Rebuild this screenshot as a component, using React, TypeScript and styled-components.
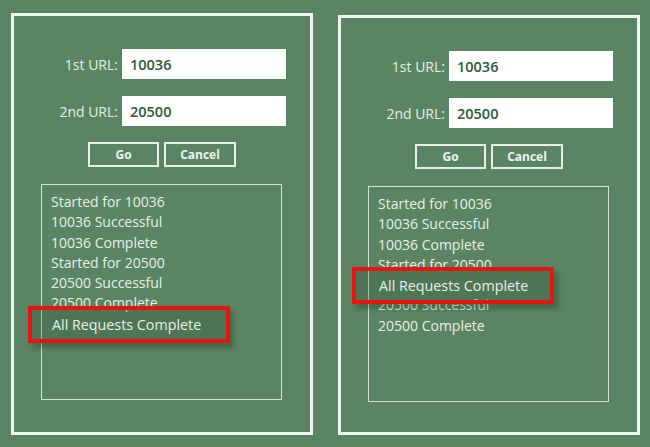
import React from 'react';
import styled, { createGlobalStyle } from 'styled-components';

const GlobalStyle = createGlobalStyle`
  html, body {
    margin: 0;
    padding: 0;
    background: #5b8462;
  }
  body {
    font-family: "Open Sans", "Noto Sans", sans-serif;
    color: #e9f0ea;
  }
`;

const Stage = styled.div`
  width: 650px;
  height: 447px;
  display: flex;
  align-items: flex-start;
  gap: 25px;
  padding-left: 11px;
  box-sizing: border-box;
  overflow: hidden;
`;

const Panel = styled.div<{ $top: number }>`
  width: 302px;
  height: ${(p) => 422 - (p.$top - 13)}px;
  margin-top: ${(p) => p.$top}px;
  box-sizing: border-box;
  border: 3px solid #f1f5f1;
  padding-top: 33px;
  display: flex;
  flex-direction: column;
  align-items: flex-start;
`;

const FieldGrid = styled.div`
  display: grid;
  grid-template-columns: 104px 164px;
  column-gap: 4px;
  row-gap: 17px;
  align-items: center;
`;

const Label = styled.label`
  text-align: right;
  font-size: 14px;
  color: #e9f0ea;
`;

const Field = styled.div`
  height: 30px;
  background: #ffffff;
  color: #2e5a38;
  font-size: 14.5px;
  font-weight: 600;
  display: flex;
  align-items: center;
  padding-left: 8px;
`;

const ButtonRow = styled.div`
  display: flex;
  gap: 5px;
  margin: 16px 0 0 74px;
`;

const Button = styled.button<{ $w: number }>`
  width: ${(p) => p.$w}px;
  height: 25px;
  box-sizing: border-box;
  background: transparent;
  border: 2px solid #e9f0ea;
  color: #eef4ee;
  font-family: inherit;
  font-size: 12px;
  font-weight: 700;
  padding: 0;
`;

const LogBox = styled.div`
  position: relative;
  width: 241px;
  height: 216px;
  margin: 17px 0 0 27px;
  box-sizing: border-box;
  border: 1px solid #d6e2d7;
  padding: 7px 0 0 9px;
`;

const LogLine = styled.div`
  font-size: 14px;
  line-height: 20.3px;
  white-space: nowrap;
`;

const Callout = styled.div<{ $left: number; $top: number }>`
  position: absolute;
  left: ${(p) => p.$left}px;
  top: ${(p) => p.$top}px;
  width: 202px;
  height: 37px;
  box-sizing: border-box;
  border: 4px solid #e8140f;
  background: rgba(40, 70, 45, 0.25);
  box-shadow: 4px 5px 5px rgba(30, 55, 35, 0.35);
  display: flex;
  align-items: center;
  padding-left: ${(p) => 10 - p.$left - 4}px;
  font-size: 14.3px;
  white-space: nowrap;
`;

type Run = {
  top: number;
  lines: string[];
  callout: { left: number; top: number };
};

const runs: Run[] = [
  {
    top: 13,
    lines: [
      'Started for 10036',
      '10036 Successful',
      '10036 Complete',
      'Started for 20500',
      '20500 Successful',
      '20500 Complete',
    ],
    callout: { left: -14, top: 121 },
  },
  {
    top: 15,
    lines: [
      'Started for 10036',
      '10036 Successful',
      '10036 Complete',
      'Started for 20500',
      '',
      '20500 Successful',
      '20500 Complete',
    ],
    callout: { left: -17, top: 80 },
  },
];

export default function App() {
  return (
    <>
      <GlobalStyle />
      <Stage>
        {runs.map((run, i) => (
          <Panel key={i} $top={run.top}>
            <FieldGrid>
              <Label>1st URL:</Label>
              <Field>10036</Field>
              <Label>2nd URL:</Label>
              <Field>20500</Field>
            </FieldGrid>
            <ButtonRow>
              <Button $w={71}>Go</Button>
              <Button $w={72}>Cancel</Button>
            </ButtonRow>
            <LogBox>
              {run.lines.map((l, j) => (
                <LogLine key={j}>{l || '\u00a0'}</LogLine>
              ))}
              <Callout $left={run.callout.left} $top={run.callout.top}>
                All Requests Complete
              </Callout>
            </LogBox>
          </Panel>
        ))}
      </Stage>
    </>
  );
}
